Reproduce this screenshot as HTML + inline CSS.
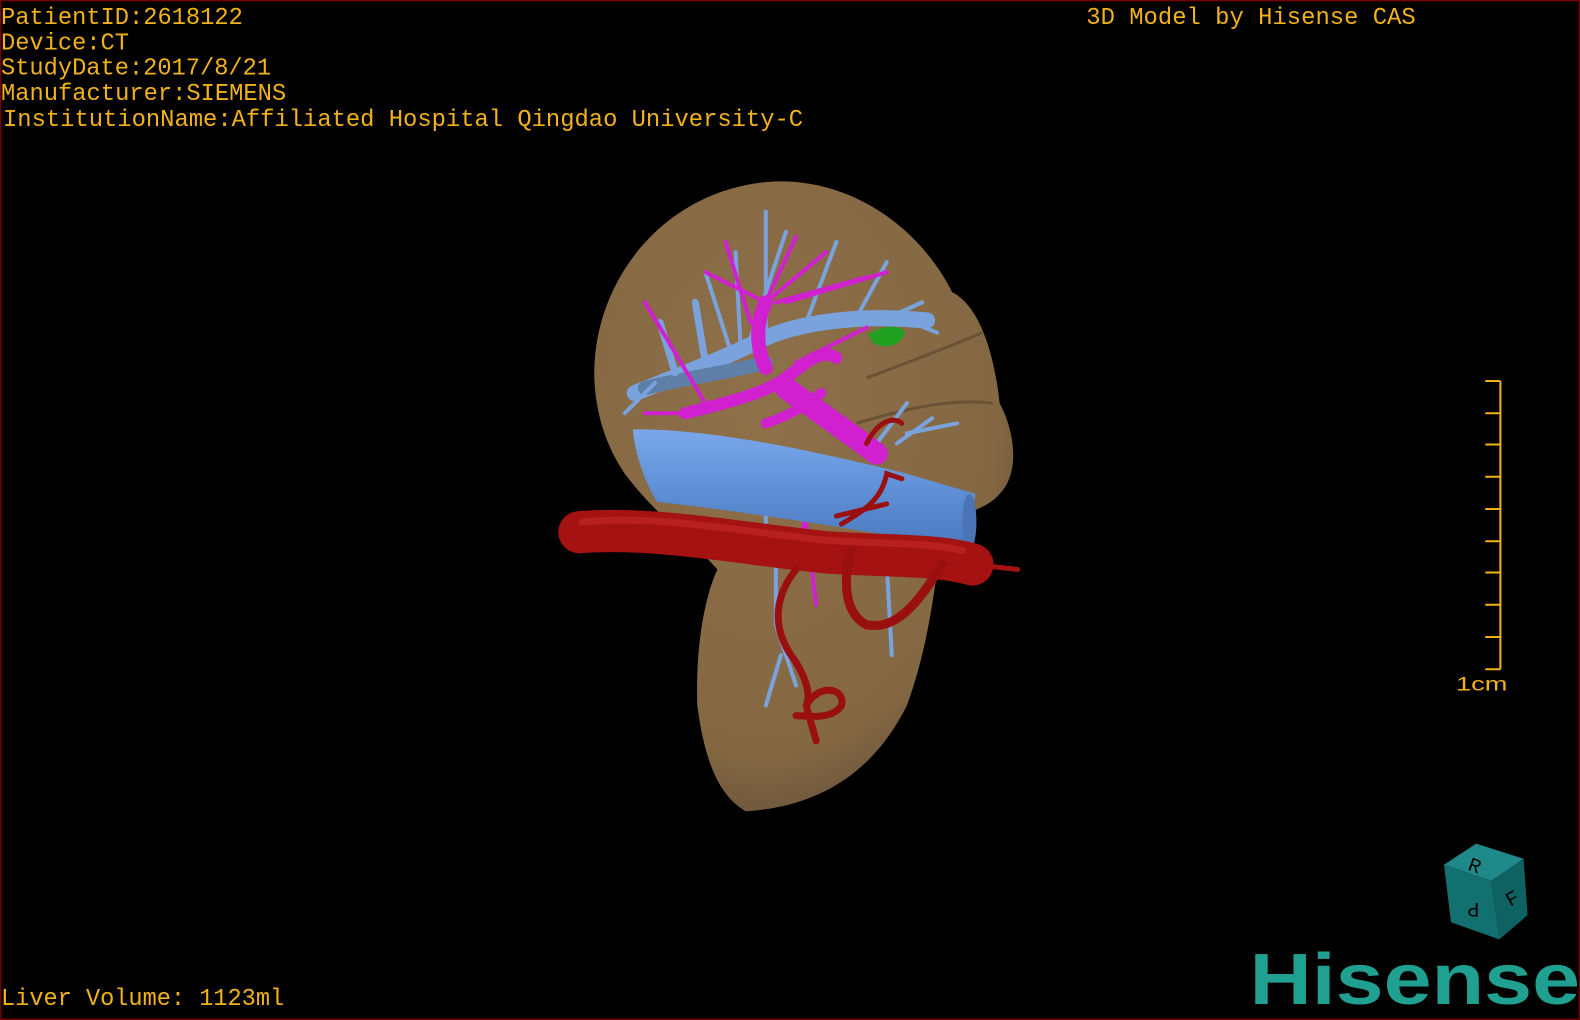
<!DOCTYPE html>
<html><head><meta charset="utf-8"><style>
html,body{margin:0;padding:0;background:#000;width:1580px;height:1020px;overflow:hidden}
svg{display:block}
</style></head><body>
<svg width="1580" height="1020" viewBox="0 0 1568 1012" preserveAspectRatio="none" xmlns="http://www.w3.org/2000/svg">
<defs>
<radialGradient id="lv" cx="0.4" cy="0.35" r="0.7">
<stop offset="0" stop-color="#8e7049"/><stop offset="0.8" stop-color="#846843"/><stop offset="1" stop-color="#66513a"/>
</radialGradient>
<linearGradient id="ivc" x1="0" y1="0" x2="0" y2="1">
<stop offset="0" stop-color="#7aa8ea"/><stop offset="0.5" stop-color="#5f8fd6"/><stop offset="1" stop-color="#4a78bd"/>
</linearGradient>
</defs>
<rect x="0" y="0" width="1568" height="1012" fill="#000"/>
<rect x="0.5" y="0.5" width="1567" height="1011" fill="none" stroke="#7a0000" stroke-width="1.5"/>
<path d="M590,380 C585,280 660,185 770,180 C850,178 915,230 945,290 C975,305 988,360 992,400 C1008,430 1012,470 992,490 C975,510 950,505 935,530 C928,580 922,640 900,700 C870,760 820,800 740,805 C715,790 700,760 692,700 C690,640 700,590 712,565 C690,540 650,510 620,470 C600,440 592,410 590,380 Z" fill="url(#lv)"/>
<path d="M860,375 C900,360 940,345 975,330 M850,420 C900,405 945,395 985,400" stroke="#6a5234" stroke-width="3" fill="none"/>
<g stroke="#7aa2dc" fill="none" stroke-linecap="round">
<path d="M630,390 C680,370 720,355 760,335 C800,318 860,312 920,318" stroke-width="16"/>
<path d="M640,385 C680,375 720,370 760,360" stroke-width="14" stroke="#5f7fa8"/>
<path d="M700,360 L690,300 M670,370 L655,320 M735,345 L730,250 M760,335 L760,210 M800,320 L830,240 M850,315 L880,260 M900,318 L930,330 M880,316 L915,300 M745,335 L780,230 M725,348 L700,270 M650,380 L620,410 M760,500 L760,560 M770,560 L770,620 L790,680 M775,650 L760,700 M880,560 L885,650 M900,430 L950,420 M890,440 L925,415 M870,440 L900,400" stroke-width="4"/>
<path d="M700,360 L690,300 M670,370 L655,320" stroke-width="7"/>
</g>
<g stroke="#d020d0" fill="none" stroke-linecap="round">
<path d="M680,410 C720,400 760,390 780,375 C800,360 815,345 830,355" stroke-width="12"/>
<path d="M780,385 C800,400 830,420 870,450" stroke-width="22"/>
<path d="M760,300 C750,320 750,345 760,365" stroke-width="14"/>
<path d="M745,320 L720,240 M755,310 L790,235 M760,300 L700,270 M760,300 L820,250 M770,300 L860,275 M780,300 L880,270 M640,410 L690,410 M700,400 L640,300 M790,360 L860,325 M800,520 L810,600 M800,510 L790,560" stroke-width="4"/>
<path d="M760,420 C790,410 800,400 815,390" stroke-width="10"/>
</g>
<path d="M628,426 C700,425 800,445 900,470 L968,490 C965,510 962,530 958,546 C880,530 760,510 652,498 C640,478 630,450 628,426 Z" fill="url(#ivc)"/>
<ellipse cx="962" cy="518" rx="7" ry="28" fill="#4a74b5"/>
<path d="M862,332 C875,322 895,322 898,330 C895,342 880,348 866,340 Z" fill="#1fa01f"/>
<g fill="none" stroke-linecap="round">
<path d="M575,528 C650,522 740,540 820,548 C880,552 930,550 965,560" stroke="#a41212" stroke-width="42"/>
<path d="M965,560 L1010,565" stroke="#a41212" stroke-width="5"/>
<path d="M578,518 C650,510 740,528 820,536 C880,540 920,538 955,546" stroke="#b82020" stroke-width="7"/>
<path d="M845,545 C835,580 840,610 860,620 C890,625 910,600 935,560" stroke="#9a1010" stroke-width="9"/>
<path d="M835,520 C860,505 875,495 880,470 L895,475 M830,512 L880,500" stroke="#9a1010" stroke-width="5"/>
<path d="M790,565 C770,590 765,620 785,650 C800,670 805,690 800,700 M800,700 C815,675 840,685 835,700 C825,715 800,710 790,710 M800,700 L810,735" stroke="#9a1010" stroke-width="7"/>
<path d="M860,440 C870,420 885,412 895,420" stroke="#9a1010" stroke-width="5"/>
</g>
<g font-family="Liberation Mono, monospace" font-size="23.5" fill="#f2b21a">
<text x="1" y="24" textLength="240" lengthAdjust="spacingAndGlyphs">PatientID:2618122</text>
<text x="1" y="49" textLength="127" lengthAdjust="spacingAndGlyphs">Device:CT</text>
<text x="1" y="74" textLength="268" lengthAdjust="spacingAndGlyphs">StudyDate:2017/8/21</text>
<text x="1" y="99" textLength="283" lengthAdjust="spacingAndGlyphs">Manufacturer:SIEMENS</text>
<text x="3" y="125" textLength="794" lengthAdjust="spacingAndGlyphs">InstitutionName:Affiliated Hospital Qingdao University-C</text>
<text x="1078" y="24" textLength="327" lengthAdjust="spacingAndGlyphs">3D Model by Hisense CAS</text>
<text x="1" y="997" textLength="281" lengthAdjust="spacingAndGlyphs">Liver Volume: 1123ml</text>
</g>
<g stroke="#f2b21a" stroke-width="2">
<line x1="1489" y1="378" x2="1489" y2="664"/>
<path d="M1474,378H1489M1474,410H1489M1474,441H1489M1474,473H1489M1474,505H1489M1474,537H1489M1474,568H1489M1474,600H1489M1474,632H1489M1474,664H1489"/>
</g>
<text x="1445" y="685" font-family="Liberation Sans, sans-serif" font-size="19" fill="#f2b21a" textLength="51" lengthAdjust="spacingAndGlyphs">1cm</text>
<path d="M1433,858 L1465,837 L1512,852 L1480,874 Z" fill="#1f8888"/>
<path d="M1433,858 L1480,874 L1488,932 L1440,915 Z" fill="#137070"/>
<path d="M1480,874 L1512,852 L1516,908 L1488,932 Z" fill="#0f6262"/>
<text x="1458" y="866" font-family="Liberation Mono, monospace" font-size="20" fill="#000" transform="rotate(20 1466 858)">R</text>
<text x="1494" y="898" font-family="Liberation Mono, monospace" font-size="20" fill="#000" transform="rotate(-30 1500 890)">F</text>
<text x="1454" y="908" font-family="Liberation Mono, monospace" font-size="20" fill="#000" transform="rotate(180 1461 902)">P</text>
<text x="1240" y="996" font-family="Liberation Sans, sans-serif" font-weight="bold" font-size="72" fill="#1fa090" textLength="328" lengthAdjust="spacingAndGlyphs">Hisense</text>
</svg>
</body></html>
